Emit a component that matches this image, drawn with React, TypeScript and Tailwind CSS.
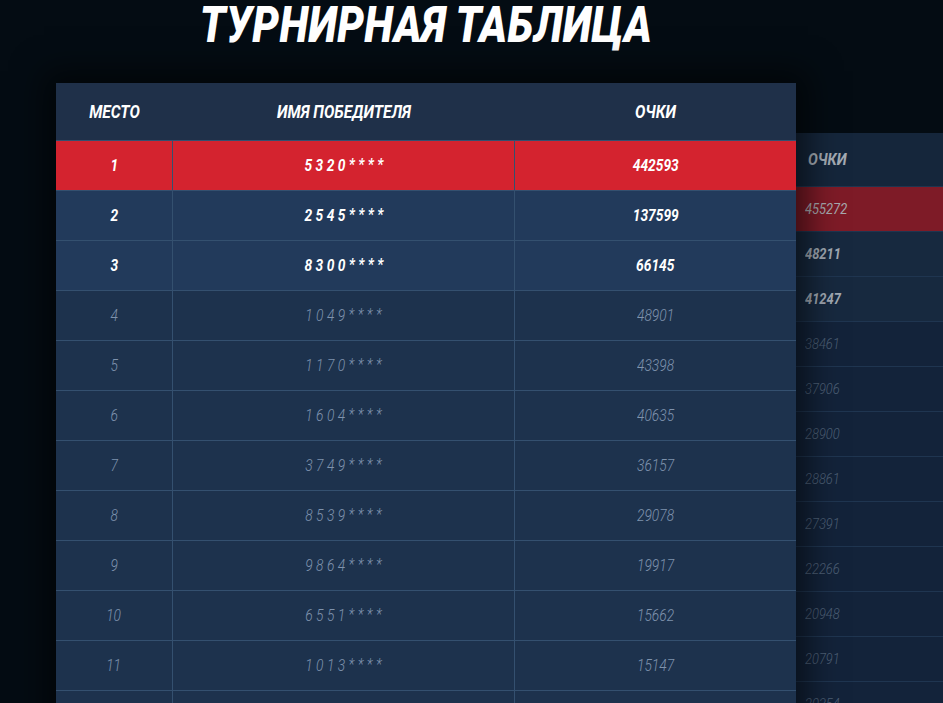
import React from 'react';

interface Row {
  place: number;
  name: string;
  points: string;
}

const rows: Row[] = [
  { place: 1, name: '5320', points: '442593' },
  { place: 2, name: '2545', points: '137599' },
  { place: 3, name: '8300', points: '66145' },
  { place: 4, name: '1049', points: '48901' },
  { place: 5, name: '1170', points: '43398' },
  { place: 6, name: '1604', points: '40635' },
  { place: 7, name: '3749', points: '36157' },
  { place: 8, name: '8539', points: '29078' },
  { place: 9, name: '9864', points: '19917' },
  { place: 10, name: '6551', points: '15662' },
  { place: 11, name: '1013', points: '15147' },
  { place: 12, name: '', points: '' },
];

const nextPoints = [
  '455272', '48211', '41247', '38461', '37906', '28900',
  '28861', '27391', '22266', '20948', '20791', '20354', '',
];

// condensed look: Roboto squeezed horizontally
const Cond: React.FC<{ children: React.ReactNode; className?: string }> = ({ children, className = '' }) => (
  <span className={`inline-block scale-x-[0.86] whitespace-nowrap ${className}`}>{children}</span>
);

const rowBg = (i: number) => {
  if (i === 0) return 'bg-[#d4232f]';
  if (i < 3) return 'bg-[#223a5b]';
  return 'bg-[#1d324d]';
};

const App: React.FC = () => {
  return (
    <div
      className="w-[943px] h-[703px] overflow-hidden bg-[#040c13] text-white"
      style={{ fontFamily: 'Roboto, "Liberation Sans", sans-serif' }}
    >
      <div className="flex pl-[56px]">
        <div className="w-[740px] shrink-0">
          {/* title */}
          <div className="h-[83px] flex justify-center pt-[1px]">
            <h1 className="text-[49px] leading-[50px] font-black italic tracking-[0.5px]">
              <Cond className="scale-x-[0.8]">ТУРНИРНАЯ ТАБЛИЦА</Cond>
            </h1>
          </div>

          {/* main table */}
          <div className="relative z-10 shadow-[0_0_30px_12px_rgba(0,0,0,0.55)]">
            <div className="grid grid-cols-[117px_342px_1fr] h-[57px] bg-[#1f3049] items-center text-center text-[18px] font-bold italic">
              <Cond>МЕСТО</Cond>
              <Cond>ИМЯ ПОБЕДИТЕЛЯ</Cond>
              <Cond>ОЧКИ</Cond>
            </div>
            {rows.map((r, i) => {
              const top = i < 3;
              const txt = top ? 'text-white font-bold' : 'text-[#7f93ad] font-light';
              return (
                <div
                  key={r.place}
                  className={`grid grid-cols-[117px_342px_1fr] h-[50px] border-t border-[#34506f] first:border-t-0 ${rowBg(i)} items-center text-center italic text-[16px] ${txt}`}
                >
                  <div className="h-full flex items-center justify-center border-r border-[#34506f]">
                    <Cond>{r.place}</Cond>
                  </div>
                  <div className="h-full flex items-center justify-center border-r border-[#34506f]">
                    {r.name && (
                      <Cond className="tracking-[0.25em] pl-[0.25em]">
                        {r.name}
                        <span className="relative -top-[1px]">****</span>
                      </Cond>
                    )}
                  </div>
                  <div className="h-full flex items-center justify-center">
                    <Cond>{r.points}</Cond>
                  </div>
                </div>
              );
            })}
          </div>
        </div>

        {/* next slide, dimmed */}
        <div className="flex-1 mt-[133px] bg-[#13223a]">
          <div className="h-[53px] bg-[#15263b] flex items-center pl-[12px] text-[17px] font-bold italic text-[#a3aab3]">
            <Cond className="origin-left">ОЧКИ</Cond>
          </div>
          {nextPoints.map((p, i) => (
            <div
              key={i}
              className={`h-[45px] flex items-center pl-[9px] text-[15px] italic border-t border-[#1f3550] first:border-t-0 ${
                i === 0
                  ? 'bg-[#7e1b27] text-[#a7a9ae]'
                  : i < 3
                  ? 'bg-[#17293f] text-[#a0a8b2] font-bold'
                  : 'bg-[#13233a] text-[#4e6077] font-light'
              }`}
            >
              <Cond className="origin-left">{p}</Cond>
            </div>
          ))}
        </div>
      </div>
    </div>
  );
};

export default App;
